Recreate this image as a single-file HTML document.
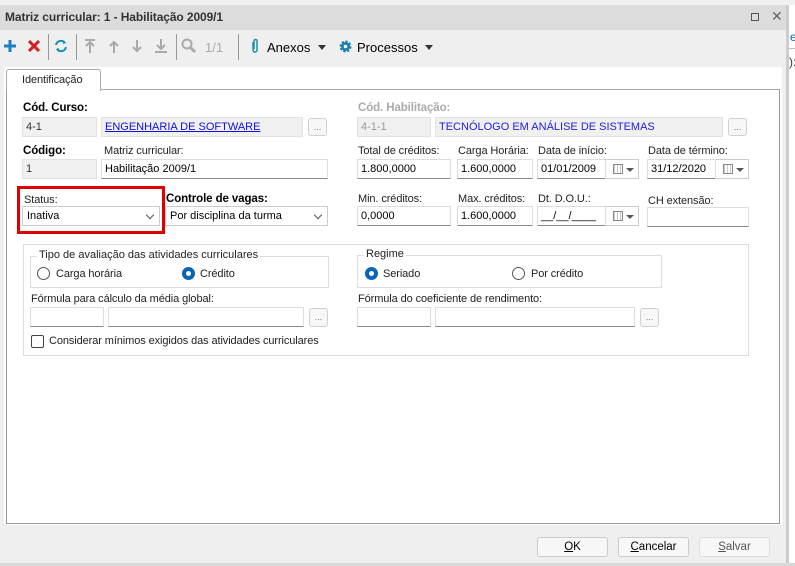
<!DOCTYPE html>
<html><head><meta charset="utf-8"><style>
*{box-sizing:border-box;margin:0;padding:0}
body{width:795px;height:566px;position:relative;background:#fff;font-family:"Liberation Sans",sans-serif;font-size:11px;color:#000;overflow:hidden}
.a{position:absolute}
.lbl{position:absolute;font-size:11px;color:#222;white-space:nowrap;letter-spacing:-0.1px}
.b{font-weight:bold;color:#000;font-size:11.5px}
.in{position:absolute;background:#fff;border:1px solid #ddd;border-bottom:1px solid #888;height:20px;padding:3px 3px;font-size:11px;white-space:nowrap;overflow:hidden}
.ro{background:#f0f0f0;border:1px solid #e2e2e2;color:#333}
.btn{position:absolute;border:1px solid #d0d0d0;border-radius:3px;background:#f7f7f7;font-size:9px;color:#777;text-align:center;line-height:16px}
.sel{position:absolute;background:#fff;border:1px solid #ccc;height:20px;padding:3px 4px;font-size:11px}
.sel:after{content:"";position:absolute;right:6px;top:5px;width:5px;height:5px;border-right:1px solid #555;border-bottom:1px solid #555;transform:rotate(45deg)}
.cal{position:absolute;background:#fff;border:1px solid #ccc;border-left:1px solid #ddd;height:20px}
.cal i{position:absolute;left:7px;top:4px;width:10px;height:10px;border:1px solid #888;background:repeating-linear-gradient(90deg,#ccc 0 1px,#fff 1px 3px)}
.cal b{position:absolute;left:20px;top:8px;border-left:4px solid transparent;border-right:4px solid transparent;border-top:4px solid #555}
.fs{position:absolute;border:1px solid #ddd}
.leg{position:absolute;top:-8px;left:6px;background:#fff;padding:0 2px;font-size:11px;color:#222}
.rad{position:absolute;width:13px;height:13px;border-radius:50%;border:1px solid #555;background:#fff}
.rad.on{border:4px solid #0a64b4}
.db{position:absolute;top:537px;width:71px;height:20px;border:1px solid #ccc;border-radius:3px;background:#f7f7f7;text-align:center;line-height:18px;font-size:11.5px}
.sep{position:absolute;top:34px;width:1px;height:26px;background:#999}
</style></head><body>
<div class="a" style="left:0;top:0;width:795px;height:5px;background:#f0f0f0"></div>
<div class="a" style="left:0;top:5px;width:789px;height:558px;background:#efefef;border-right:3px solid #ccc"></div>
<div class="a" style="left:0;top:5px;width:786px;height:25px;background:#dcdcdc"></div>
<div class="lbl b" style="left:5px;top:10px;color:#333;font-size:12px">Matriz curricular: 1 - Habilitação 2009/1</div>
<div class="a" style="left:751px;top:13px;width:8px;height:8px;border:1px solid #555"></div>
<div class="a" style="left:771px;top:8px;font-size:14px;color:#666">✕</div>
<div class="a" style="left:0;top:563px;width:795px;height:3px;background:#d8d8d8"></div>
<div class="a" style="left:790px;top:30px;font-size:12px;color:#0a64b4">e</div>
<div class="a" style="left:789px;top:55px;font-size:12px;color:#333">):</div>
<div class="a" style="left:789px;top:48px;width:6px;height:1px;background:#bbb"></div>
<!-- toolbar -->
<svg class="a" style="left:4px;top:40px" width="12" height="12"><path d="M6 0v12M0 6h12" stroke="#1a7fc4" stroke-width="3"/></svg>
<svg class="a" style="left:28px;top:40px" width="12" height="12"><path d="M1 1l10 10M11 1L1 11" stroke="#d32020" stroke-width="3"/></svg>
<div class="sep" style="left:48px"></div>
<svg class="a" style="left:54px;top:39px" width="14" height="14" viewBox="0 0 14 14"><path d="M2 6a5 5 0 0 1 9-2M12 8a5 5 0 0 1-9 2" stroke="#1a8fb0" stroke-width="2" fill="none"/><path d="M9 1l3 3-3 1zM5 13l-3-3 3-1z" fill="#1a8fb0"/></svg>
<div class="sep" style="left:76px"></div>
<svg class="a" style="left:84px;top:38px" width="100" height="16" viewBox="0 0 100 16"><g stroke="#aaa" stroke-width="2" fill="none"><path d="M1 2h10M6 15V5M2 8l4-4 4 4"/><path d="M30 15V4M26 8l4-4 4 4"/><path d="M53 2v11M49 9l4 4 4-4"/><path d="M77 1v10M73 7l4 4 4-4M71 14h12"/></g></svg>
<div class="sep" style="left:176px"></div>
<svg class="a" style="left:181px;top:38px" width="16" height="16"><circle cx="6" cy="6" r="4.5" stroke="#aaa" stroke-width="2" fill="none"/><path d="M9 9l5 5" stroke="#aaa" stroke-width="3"/></svg>
<div class="a" style="left:205px;top:40px;font-size:13px;color:#aaa">1/1</div>
<div class="sep" style="left:238px"></div>
<svg class="a" style="left:250px;top:38px" width="10" height="16"><path d="M3 4v8a2 2 0 0 0 4 0V3a1.5 1.5 0 0 0-3 0v8" stroke="#1a8fb0" stroke-width="1.5" fill="none"/></svg>
<div class="a" style="left:267px;top:40px;font-size:13px">Anexos</div>
<div class="a" style="left:318px;top:45px;border-left:4px solid transparent;border-right:4px solid transparent;border-top:5px solid #333"></div>
<svg class="a" style="left:339px;top:40px" width="13" height="13"><circle cx="6.5" cy="6.5" r="4.5" fill="#1a7fb0" stroke="#1a7fb0" stroke-width="3" stroke-dasharray="2 1.5"/><circle cx="6.5" cy="6.5" r="1.8" fill="#fff"/></svg>
<div class="a" style="left:357px;top:40px;font-size:13px">Processos</div>
<div class="a" style="left:425px;top:45px;border-left:4px solid transparent;border-right:4px solid transparent;border-top:5px solid #333"></div>
<!-- panel -->
<div class="a" style="left:4px;top:67px;width:778px;height:458px;background:#fff"></div>
<div class="a" style="left:6px;top:89px;width:774px;height:435px;border:1px solid #999;border-top:1px solid #aaa;background:#fff"></div>
<div class="a" style="left:6px;top:69px;width:95px;height:22px;border:1px solid #aaa;border-bottom:none;border-radius:3px 3px 0 0;background:#fff"></div>
<div class="lbl" style="left:22px;top:74px">Identificação</div>
<!-- left col -->
<div class="lbl b" style="left:23px;top:102px">Cód. Curso:</div>
<div class="in ro" style="left:22px;top:117px;width:75px">4-1</div>
<div class="in ro" style="left:101px;top:117px;width:202px;color:#1010e0;text-decoration:underline">ENGENHARIA DE SOFTWARE</div>
<div class="btn" style="left:308px;top:118px;width:19px;height:18px">...</div>
<div class="lbl b" style="left:23px;top:145px">Código:</div>
<div class="lbl" style="left:104px;top:145px">Matriz curricular:</div>
<div class="in ro" style="left:22px;top:159px;width:75px">1</div>
<div class="in" style="left:101px;top:159px;width:227px">Habilitação 2009/1</div>
<div class="a" style="left:17px;top:186px;width:148px;height:48px;border:3px solid #e00000"></div>
<div class="lbl" style="left:24px;top:194px">Status:</div>
<div class="sel" style="left:22px;top:206px;width:138px">Inativa</div>
<div class="lbl b" style="left:166px;top:193px">Controle de vagas:</div>
<div class="sel" style="left:165px;top:206px;width:163px">Por disciplina da turma</div>
<!-- right col -->
<div class="lbl b" style="left:358px;top:102px;color:#aaa">Cód. Habilitação:</div>
<div class="in ro" style="left:357px;top:117px;width:74px;color:#999">4-1-1</div>
<div class="in ro" style="left:435px;top:117px;width:288px;color:#2020e0">TECNÓLOGO EM ANÁLISE DE SISTEMAS</div>
<div class="btn" style="left:728px;top:118px;width:19px;height:18px">...</div>
<div class="lbl" style="left:358px;top:145px">Total de créditos:</div>
<div class="lbl" style="left:458px;top:145px">Carga Horária:</div>
<div class="lbl" style="left:538px;top:145px">Data de início:</div>
<div class="lbl" style="left:648px;top:145px">Data de término:</div>
<div class="in" style="left:357px;top:159px;width:94px">1.800,0000</div>
<div class="in" style="left:457px;top:159px;width:76px">1.600,0000</div>
<div class="in" style="left:537px;top:159px;width:69px">01/01/2009</div>
<div class="cal" style="left:605px;top:159px;width:34px"><i></i><b></b></div>
<div class="in" style="left:647px;top:159px;width:69px">31/12/2020</div>
<div class="cal" style="left:715px;top:159px;width:34px"><i></i><b></b></div>
<div class="lbl" style="left:358px;top:193px">Min. créditos:</div>
<div class="lbl" style="left:458px;top:193px">Max. créditos:</div>
<div class="lbl" style="left:538px;top:193px">Dt. D.O.U.:</div>
<div class="lbl" style="left:648px;top:195px">CH extensão:</div>
<div class="in" style="left:357px;top:206px;width:94px">0,0000</div>
<div class="in" style="left:457px;top:206px;width:76px">1.600,0000</div>
<div class="in" style="left:537px;top:206px;width:69px">__/__/____</div>
<div class="cal" style="left:605px;top:206px;width:34px"><i></i><b></b></div>
<div class="in" style="left:647px;top:207px;width:102px"></div>
<!-- group -->
<div class="fs" style="left:23px;top:244px;width:726px;height:112px"></div>
<div class="fs" style="left:30px;top:256px;width:299px;height:32px"><span class="leg">Tipo de avaliação das atividades curriculares</span></div>
<div class="rad" style="left:37px;top:267px"></div><div class="lbl" style="left:56px;top:268px">Carga horária</div>
<div class="rad on" style="left:182px;top:267px"></div><div class="lbl" style="left:200px;top:268px">Crédito</div>
<div class="fs" style="left:357px;top:255px;width:305px;height:33px"><span class="leg">Regime</span></div>
<div class="rad on" style="left:365px;top:267px"></div><div class="lbl" style="left:383px;top:268px">Seriado</div>
<div class="rad" style="left:512px;top:267px"></div><div class="lbl" style="left:531px;top:268px">Por crédito</div>
<div class="lbl" style="left:31px;top:293px">Fórmula para cálculo da média global:</div>
<div class="in" style="left:30px;top:307px;width:74px"></div>
<div class="in" style="left:108px;top:307px;width:196px"></div>
<div class="btn" style="left:309px;top:308px;width:19px;height:19px">...</div>
<div class="lbl" style="left:358px;top:293px">Fórmula do coeficiente de rendimento:</div>
<div class="in" style="left:357px;top:307px;width:74px"></div>
<div class="in" style="left:435px;top:307px;width:200px"></div>
<div class="btn" style="left:640px;top:308px;width:19px;height:19px">...</div>
<div class="a" style="left:31px;top:335px;width:13px;height:13px;border:1px solid #444;border-radius:2px"></div>
<div class="lbl" style="left:49px;top:335px">Considerar mínimos exigidos das atividades curriculares</div>
<!-- bottom buttons -->
<div class="db" style="left:537px"><u>O</u>K</div>
<div class="db" style="left:618px"><u>C</u>ancelar</div>
<div class="db" style="left:699px;color:#555;border-color:#ddd"><u>S</u>alvar</div>
</body></html>
